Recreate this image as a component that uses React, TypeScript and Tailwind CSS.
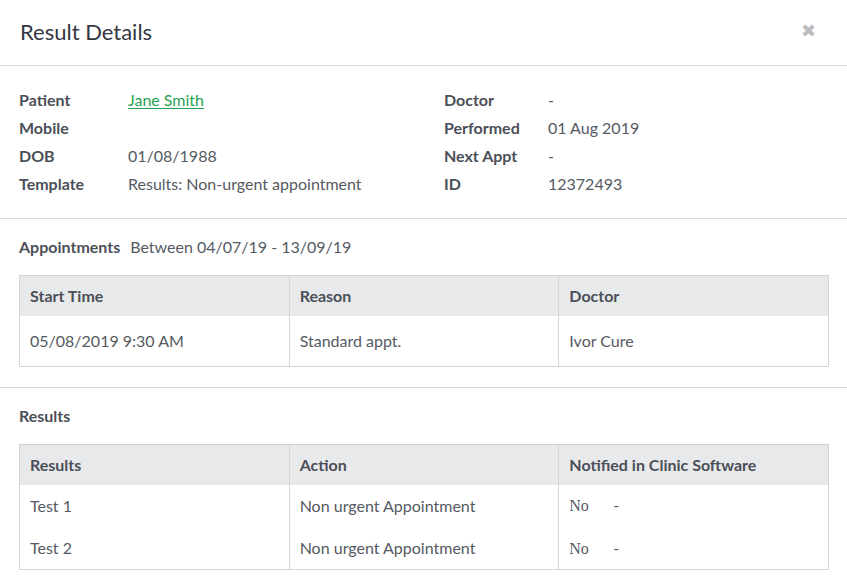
import React from 'react';

const labelCls = 'w-[109px] shrink-0 font-bold text-[#4b4f58]';
const valueCls = 'text-[#555a62]';

const InfoRow = ({ label, value, labelWidth }: { label: string; value?: React.ReactNode; labelWidth?: string }) => (
  <div className="flex h-[28px] items-center">
    <span className={labelWidth ? `${labelWidth} shrink-0 font-bold text-[#4b4f58]` : labelCls}>{label}</span>
    <span className={valueCls}>{value}</span>
  </div>
);

export default function App() {
  return (
    <div className="w-[847px] h-[587px] overflow-hidden bg-white text-[16px] leading-[20px] text-[#555a62]" style={{ fontFamily: 'Lato, "Open Sans", sans-serif' }}>
      {/* Header */}
      <div className="flex h-[66px] items-center justify-between border-b border-[#d9d9d9] pl-[20px] pr-[31px]">
        <h1 className="text-[22px] text-[#333842] pb-[2px]">Result Details</h1>
        <span className="text-[18px] font-bold text-[#bdbdbd] leading-none pb-[4px]" style={{ fontFamily: '"DejaVu Sans", sans-serif' }}>✖</span>
      </div>

      {/* Patient info */}
      <div className="flex border-b border-[#d9d9d9] px-[19px] pt-[20px] pb-[20px]">
        <div className="w-[425px]">
          <InfoRow label="Patient" value={<a className="text-[#27a252] underline underline-offset-2" href="#">Jane Smith</a>} />
          <InfoRow label="Mobile" />
          <InfoRow label="DOB" value="01/08/1988" />
          <InfoRow label="Template" value="Results: Non-urgent appointment" />
        </div>
        <div>
          <InfoRow label="Doctor" value="-" labelWidth="w-[104px]" />
          <InfoRow label="Performed" value="01 Aug 2019" labelWidth="w-[104px]" />
          <InfoRow label="Next Appt" value="-" labelWidth="w-[104px]" />
          <InfoRow label="ID" value="12372493" labelWidth="w-[104px]" />
        </div>
      </div>

      {/* Appointments */}
      <div className="border-b border-[#d9d9d9] pl-[19px] pr-[18px] pt-[18px] pb-[20px]">
        <div className="flex items-center gap-[10px] h-[20px]">
          <span className="font-bold text-[#4b4f58]">Appointments</span>
          <span>Between 04/07/19 - 13/09/19</span>
        </div>
        <table className="mt-[18px] w-full table-fixed border-collapse border border-[#d4d4d4]">
          <thead>
            <tr className="h-[40px] bg-[#e8e9eb] text-left">
              <th className="px-[10px] font-bold text-[#4b4f58] border-r border-[#d4d4d4]">Start Time</th>
              <th className="px-[10px] font-bold text-[#4b4f58] border-r border-[#d4d4d4]">Reason</th>
              <th className="px-[10px] font-bold text-[#4b4f58]">Doctor</th>
            </tr>
          </thead>
          <tbody>
            <tr className="h-[51px]">
              <td className="px-[10px] border-r border-[#d4d4d4]">05/08/2019 9:30 AM</td>
              <td className="px-[10px] border-r border-[#d4d4d4]">Standard appt.</td>
              <td className="px-[10px]">Ivor Cure</td>
            </tr>
          </tbody>
        </table>
      </div>

      {/* Results */}
      <div className="pl-[19px] pr-[18px] pt-[18px]">
        <div className="flex items-center h-[20px]">
          <span className="font-bold text-[#4b4f58]">Results</span>
        </div>
        <table className="mt-[18px] w-full table-fixed border-collapse border border-[#d4d4d4]">
          <thead>
            <tr className="h-[40px] bg-[#e8e9eb] text-left">
              <th className="px-[10px] font-bold text-[#4b4f58] border-r border-[#d4d4d4]">Results</th>
              <th className="px-[10px] font-bold text-[#4b4f58] border-r border-[#d4d4d4]">Action</th>
              <th className="px-[10px] font-bold text-[#4b4f58]">Notified in Clinic Software</th>
            </tr>
          </thead>
          <tbody>
            {['Test 1', 'Test 2'].map((t) => (
              <tr key={t} className="h-[42.5px]">
                <td className="px-[10px] border-r border-[#d4d4d4]">{t}</td>
                <td className="px-[10px] border-r border-[#d4d4d4]">Non urgent Appointment</td>
                <td className="px-[10px]">
                  <span className="inline-block w-[44px] text-[16px]" style={{ fontFamily: '"Liberation Serif", serif' }}>No</span>
                  <span>-</span>
                </td>
              </tr>
            ))}
          </tbody>
        </table>
      </div>
    </div>
  );
}
